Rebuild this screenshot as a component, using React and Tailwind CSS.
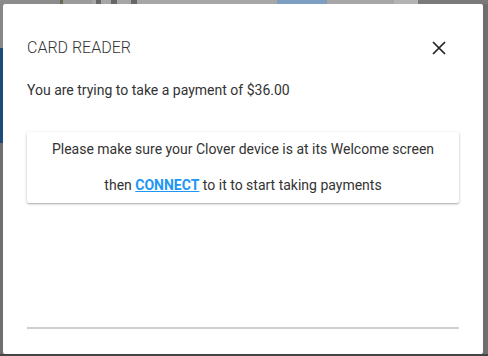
export default function App() {
  return (
    <div className="relative w-[488px] h-[356px] overflow-hidden bg-[#6f6f6f]" style={{ fontFamily: "Roboto, 'Liberation Sans', sans-serif" }}>
      {/* backdrop page remnants */}
      <div className="flex h-[4px] w-full">
        <div className="w-[60px] bg-[#8c8c8c]" />
        <div className="w-[3px] bg-[#6a6a50]" />
        <div className="w-[29px] bg-[#9a9a9a]" />
        <div className="w-[4px] bg-[#a6a6a6]" />
        <div className="w-[5px] bg-[#666]" />
        <div className="w-[10px] bg-[#a6a6a6]" />
        <div className="w-[6px] bg-[#666]" />
        <div className="w-[14px] bg-[#a6a6a6]" />
        <div className="w-[6px] bg-[#666]" />
        <div className="w-[140px] bg-[#a6a6a6]" />
        <div className="w-[50px] bg-[#7d9ec0]" />
        <div className="w-[67px] bg-[#a6a6a6]" />
        <div className="w-[24px] bg-[#b3b3b3]" />
        <div className="flex-1 bg-[#7a7a7a]" />
      </div>
      <div className="w-[3px] h-[44px] bg-[#888]" />
      <div className="w-[3px] h-[95px] bg-[#1c4a78]" />

      {/* modal */}
      <div className="absolute left-[3px] top-[4px] w-[480px] h-[350px] bg-white rounded-[2px] px-6 flex flex-col">
        <div className="flex items-center justify-between pt-[32px]">
          <div className="text-[16px] font-light text-[#333] leading-[24px]">CARD READER</div>
          <svg width="14" height="14" viewBox="0 0 14 14" className="mr-[13px]">
            <path d="M1 1 L13 13 M13 1 L1 13" stroke="#222" strokeWidth="1.7" />
          </svg>
        </div>
        <div className="mt-[20px] text-[14px] text-[#333] leading-[20px]">You are trying to take a payment of $36.00</div>
        <div className="mt-[32px] bg-white rounded-[2px] shadow-[0_1px_3px_rgba(0,0,0,0.25),0_1px_1px_rgba(0,0,0,0.12)] flex flex-col items-center pt-[7px] pb-[8px] text-[14px] text-[#333] leading-[20px] gap-[16px]">
          <div>Please make sure your Clover device is at its Welcome screen</div>
          <div>
            then <span className="font-bold text-[#2196f3] underline">CONNECT</span> to it to start taking payments
          </div>
        </div>
        <div className="mt-auto mb-[25px] h-[2px] bg-[#cfcfcf]" />
      </div>
      <div className="absolute left-0 bottom-0 w-full h-[2px] bg-[#444]" />
    </div>
  );
}
